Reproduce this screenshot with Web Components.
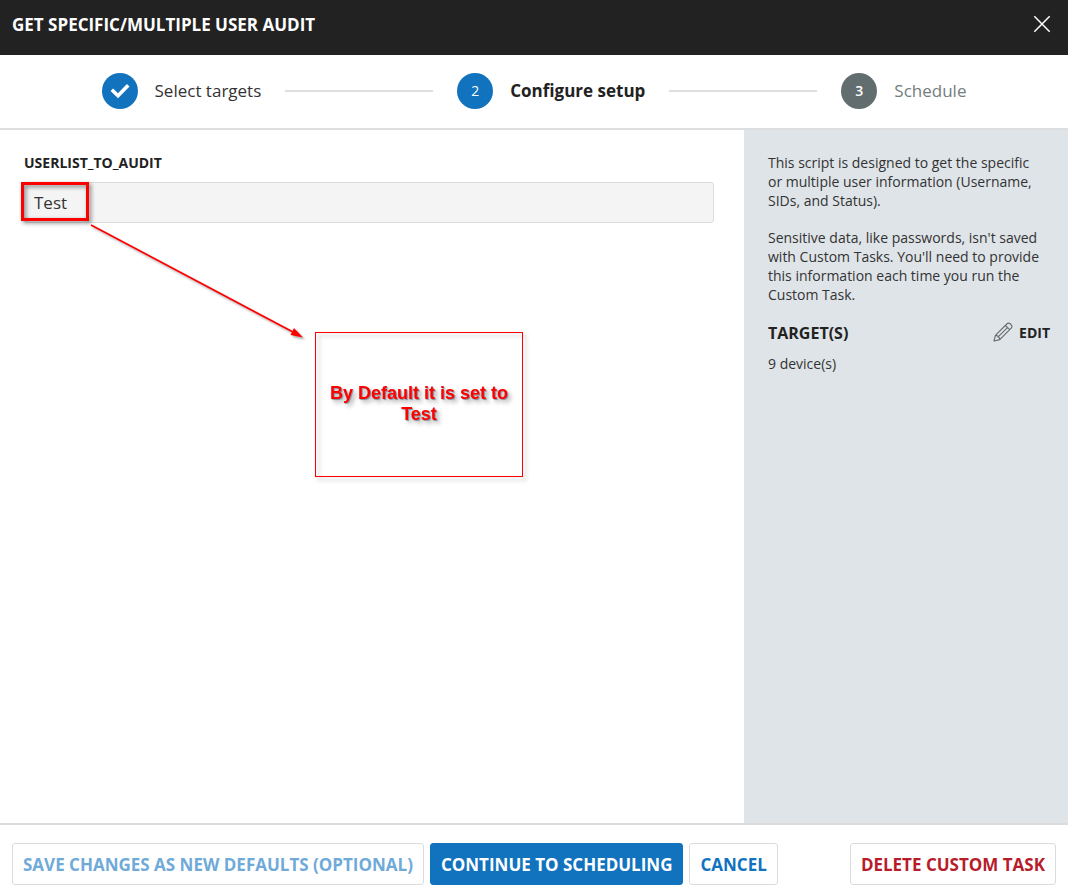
<!DOCTYPE html>
<html lang="en">
<head>
<meta charset="utf-8">
<meta name="viewport" content="width=device-width, initial-scale=1">
<title>Get Specific/Multiple User Audit</title>
<style>
  body { margin: 0; background: #fff; color: #222; font: 14px/19px "Open Sans", sans-serif; }
</style>
</head>
<body>
<task-dialog></task-dialog>
<script>
const define = (name, html, setup) => {
  const template = document.createElement('template');
  template.innerHTML = html;
  customElements.define(name, class extends HTMLElement {
    constructor() {
      super();
      this.attachShadow({ mode: 'open' }).append(template.content.cloneNode(true));
    }
    connectedCallback() { if (setup) setup(this, this.shadowRoot); }
  });
};

define('dialog-header', `
  <style>
    :host { display: flex; align-items: center; justify-content: space-between; box-sizing: border-box;
      height: 55px; padding: 0 12px 6px; background: #222; color: #fff; }
    h1 { margin: 0; font-size: 17px; line-height: 22px; font-weight: 700; }
    button { display: block; border: 0; padding: 4px 5px 6px; background: none; color: inherit; cursor: pointer; }
    svg { display: block; }
  </style>
  <h1><slot></slot></h1>
  <button type="button" aria-label="Close">
    <svg width="18" height="18" viewBox="0 0 18 18" fill="none" stroke="currentColor" stroke-width="1.5"><path d="M1.3 1.3 16.7 16.7M16.7 1.3 1.3 16.7"/></svg>
  </button>`);

define('wizard-step', `
  <style>
    :host { display: flex; align-items: center; gap: 17px; color: #333; font-size: 17px; line-height: 22px; white-space: nowrap; }
    .dot { display: flex; align-items: center; justify-content: center; width: 36px; height: 36px;
      border-radius: 50%; background: #1172be; color: #fff; font-size: 14px; font-weight: 400; }
    svg, :host([state="done"]) .number { display: none; }
    :host([state="done"]) svg { display: block; }
    :host([state="current"]) { color: #222; font-weight: 700; }
    :host([state="next"]) { color: #757d7e; }
    :host([state="next"]) .dot { background: #626d6f; font-weight: 600; }
  </style>
  <span class="dot">
    <span class="number"></span>
    <svg width="20" height="16" viewBox="0 0 20 16" fill="none" stroke="#fff" stroke-width="3.6"><path d="M1.8 6.8 8 12.8 18.2 2.2"/></svg>
  </span>
  <slot></slot>`, (el, root) => {
    root.querySelector('.number').textContent = el.getAttribute('state') === 'done' ? '' : el.getAttribute('number');
  });

define('wizard-steps', `
  <style>
    :host { display: flex; align-items: center; justify-content: center; gap: 24px; box-sizing: border-box;
      height: 75px; padding: 0 24px 1px; border-bottom: 2px solid #dcdedf; }
    i { flex: 0 1 148px; height: 2px; background: #dcdedf; }
  </style>
  <wizard-step state="done" number="1">Select targets</wizard-step>
  <i></i>
  <wizard-step state="current" number="2">Configure setup</wizard-step>
  <i></i>
  <wizard-step state="next" number="3">Schedule</wizard-step>`);

define('text-field', `
  <style>
    :host { display: block; position: relative; }
    label { display: block; margin-bottom: 10px; font-weight: 700; }
    input { display: block; box-sizing: border-box; width: 100%; height: 41px; padding: 0 9px; border: 1px solid #dcdcdc;
      border-radius: 3px; background: #f4f4f4; color: #333; font: inherit; font-size: 17px; }
  </style>
  <label for="field"></label>
  <input id="field" type="text">`, (el, root) => {
    root.querySelector('label').textContent = el.getAttribute('label');
    root.querySelector('input').value = el.getAttribute('value');
  });

define('callout-note', `
  <style>
    :host { position: absolute; left: 21px; top: 52px; width: 502px; height: 296px; pointer-events: none; }
    .mark { position: absolute; left: 0; top: 0; box-sizing: border-box; width: 68px; height: 39px;
      border: 3px solid #f00; filter: drop-shadow(2px 2px 2px rgba(0,0,0,.5)); }
    svg { position: absolute; left: 0; top: 0; filter: drop-shadow(2px 2px 1px rgba(0,0,0,.35)); }
    .note { position: absolute; right: 0; bottom: 1px; display: flex; align-items: center; justify-content: center;
      box-sizing: border-box; width: 208px; height: 145px; padding-bottom: 2px; border: 1px solid #f00; text-align: center;
      filter: drop-shadow(3px 3px 2px rgba(0,0,0,.3)); }
    p { margin: 0; color: #f00; font: 700 18px/21px "Liberation Sans", sans-serif; text-shadow: 1px 1px 1px rgba(0,30,60,.4); }
  </style>
  <div class="mark"></div>
  <svg width="300" height="170" viewBox="0 0 300 170"><path d="M70 43 272 150" stroke="#f00" stroke-width="1.7"/><path d="M282 155.500 269.500 153 273 146Z" fill="#f00"/></svg>
  <div class="note"><p><slot></slot></p></div>`);

define('setup-form', `
  <style>
    :host { display: block; position: relative; box-sizing: border-box; padding: 23px 30px 24px 24px; }
  </style>
  <form><text-field label="USERLIST_TO_AUDIT" value="Test"></text-field></form>
  <callout-note>By Default it is set to Test</callout-note>`);

define('task-summary', `
  <style>
    :host { display: block; box-sizing: border-box; padding: 23px 18px 24px 24px; background: #dfe4e8; color: #333; }
    p { margin: 0 0 18px; padding-right: 6px; }
    .head { display: flex; align-items: flex-start; justify-content: space-between; margin: 18px 0 10px; color: #222; }
    h2 { margin: 0; font-size: 16px; line-height: 22px; font-weight: 700; }
    button { display: flex; align-items: center; gap: 6px; border: 0; padding: 0; background: none; color: inherit; font: inherit; font-weight: 700; cursor: pointer; }
    svg { display: block; }
  </style>
  <p>This script is designed to get the specific or multiple user information (Username, SIDs, and Status).</p>
  <p>Sensitive data, like passwords, isn't saved with Custom Tasks. You'll need to provide this information each time you run the Custom Task.</p>
  <div class="head">
    <h2>TARGET(S)</h2>
    <button type="button">
      <svg width="20" height="20" viewBox="0 0 20 20" fill="none" stroke="#626d6f" stroke-width="1.1" stroke-linejoin="round"><path d="M1 19 2.400 13.400 13.800 2C15 .8 16.200 .8 17.400 2L18.200 2.800C19.300 4 19.300 5 18.200 6.200L6.800 17.600ZM2.400 13.400C4.600 13.400 6.800 15.400 6.800 17.600M12.300 3.500 16.700 7.700M4.600 15.400 14.500 5.600"/></svg>
      EDIT
    </button>
  </div>
  <div>9 device(s)</div>`);

define('action-button', `
  <style>
    :host { display: block; }
    button { display: block; box-sizing: border-box; height: 42px; padding: 0 10px; border: 1px solid #dcdcdc; border-radius: 3px;
      background: #fff; color: #1172be; font: inherit; font-size: 17px; font-weight: 700; white-space: nowrap; cursor: pointer; }
    :host([kind="primary"]) button { border-color: #1172be; background: #1172be; color: #fff; }
    :host([kind="danger"]) button { color: #b71c2b; }
    :host([disabled]) button { color: #70aad8; cursor: default; }
  </style>
  <button type="button"><slot></slot></button>`, (el, root) => {
    root.querySelector('button').disabled = el.hasAttribute('disabled');
  });

define('dialog-footer', `
  <style>
    :host { display: flex; gap: 6px; padding: 18px 12px 3px; border-top: 2px solid #dcdcdc; }
    .end { margin-left: auto; }
  </style>
  <action-button disabled>SAVE CHANGES AS NEW DEFAULTS (OPTIONAL)</action-button>
  <action-button kind="primary">CONTINUE TO SCHEDULING</action-button>
  <action-button>CANCEL</action-button>
  <action-button kind="danger" class="end">DELETE CUSTOM TASK</action-button>`);

define('task-dialog', `
  <style>
    :host { display: flex; flex-direction: column; min-height: 100vh; }
    main { flex: 1; display: grid; grid-template-columns: minmax(0, 1fr) 324px; }
  </style>
  <dialog-header>GET SPECIFIC/MULTIPLE USER AUDIT</dialog-header>
  <wizard-steps></wizard-steps>
  <main>
    <setup-form></setup-form>
    <task-summary></task-summary>
  </main>
  <dialog-footer></dialog-footer>`);
</script>
</body>
</html>
